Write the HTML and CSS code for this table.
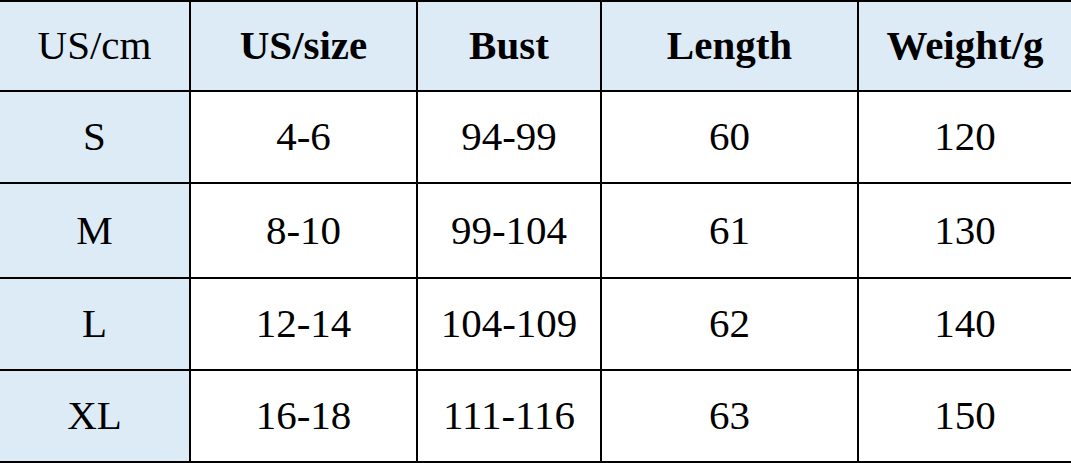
FILE: index.html
```html
<!DOCTYPE html>
<html>
<head>
<meta charset="utf-8">
<link rel="stylesheet" href="styles.css">
</head>
<body>
<table class="size-table">
  <colgroup>
    <col class="c1"><col class="c2"><col class="c3"><col class="c4"><col class="c5">
  </colgroup>
  <thead>
    <tr class="head">
      <th class="first normal">US/cm</th>
      <th>US/size</th>
      <th>Bust</th>
      <th>Length</th>
      <th>Weight/g</th>
    </tr>
  </thead>
  <tbody>
    <tr class="r1"><td class="first">S</td><td>4-6</td><td>94-99</td><td>60</td><td>120</td></tr>
    <tr class="r2"><td class="first">M</td><td>8-10</td><td>99-104</td><td>61</td><td>130</td></tr>
    <tr class="r3"><td class="first">L</td><td>12-14</td><td>104-109</td><td>62</td><td>140</td></tr>
    <tr class="r4"><td class="first">XL</td><td>16-18</td><td>111-116</td><td>63</td><td>150</td></tr>
  </tbody>
</table>
</body>
</html>
```

FILE: styles.css
```css
html, body {
  margin: 0;
  padding: 0;
  background: #ffffff;
}
.size-table {
  width: 1071px;
  table-layout: fixed;
  border-collapse: collapse;
  font-family: "Liberation Serif", "Times New Roman", serif;
  color: #000;
}
.c1 { width: 190px; }
.c2 { width: 227px; }
.c3 { width: 184px; }
.c4 { width: 257px; }
.c5 { width: 213px; }
.size-table th,
.size-table td {
  border: 2px solid #000;
  text-align: center;
  vertical-align: middle;
  padding: 0;
  font-size: 41px;
  line-height: 1.15;
}
.size-table tr > :first-child { border-left: none; }
.size-table tr > :last-child { border-right: none; }
.size-table th {
  font-weight: bold;
  background: #ddebf7;
}
.size-table th.normal { font-weight: normal; }
.size-table td.first { background: #ddebf7; }
.head { height: 90px; }
.r1 { height: 92px; }
.r2 { height: 95px; }
.r3 { height: 92px; }
.r4 { height: 92px; }
```
